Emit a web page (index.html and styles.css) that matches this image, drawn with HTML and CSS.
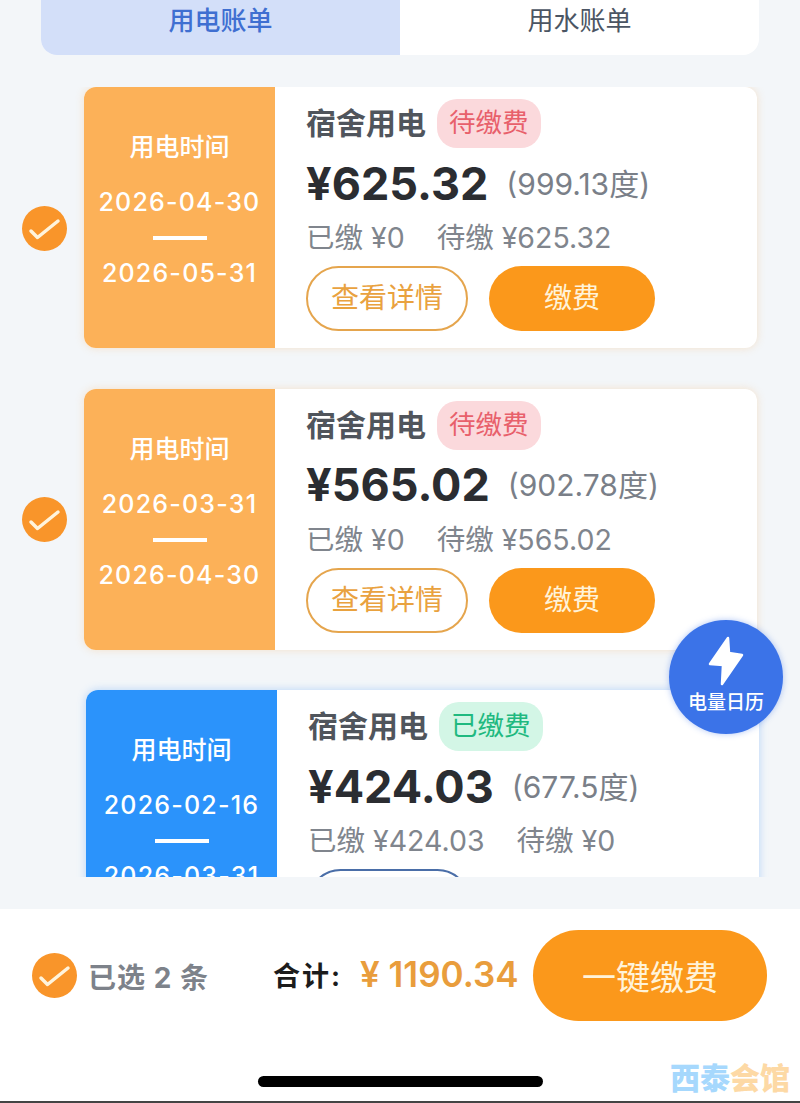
FILE: index.html
```html
<!DOCTYPE html>
<html lang="zh-CN">

<head>
  <meta charset="UTF-8">
  <meta name="viewport" content="width=device-width, initial-scale=1.0">
  <title>用电账单</title>
  <link rel="stylesheet" href="styles.css">
</head>

<body>
  <div class="page">
    <div class="tabs">
      <div class="tab tab-active">用电账单</div>
      <div class="tab">用水账单</div>
    </div>

    <div class="list">
      <div class="row">
        <svg class="check check-low" viewBox="0 0 45 45"><circle cx="22.5" cy="22.5" r="22.5" /><path d="M9 25l6.5 6.5L36 15" /></svg>
        <div class="card">
          <div class="period">
            <div class="period-title">用电时间</div>
            <div class="period-date">2026-04-30</div>
            <div class="period-bar"></div>
            <div class="period-date">2026-05-31</div>
          </div>
          <div class="info">
            <div class="info-title"><span class="info-name">宿舍用电</span> <span class="tag tag-unpaid">待缴费</span></div>
            <div class="info-amount"><b>¥625.32</b> <span class="usage">(999.13度)</span></div>
            <div class="info-paid"><span>已缴 ¥0</span><span>待缴 ¥625.32</span></div>
            <div class="actions">
              <button class="btn btn-detail">查看详情</button>
              <button class="btn btn-pay">缴费</button>
            </div>
          </div>
        </div>
      </div>

      <div class="row">
        <svg class="check" viewBox="0 0 45 45"><circle cx="22.5" cy="22.5" r="22.5" /><path d="M9 25l6.5 6.5L36 15" /></svg>
        <div class="card">
          <div class="period">
            <div class="period-title">用电时间</div>
            <div class="period-date">2026-03-31</div>
            <div class="period-bar"></div>
            <div class="period-date">2026-04-30</div>
          </div>
          <div class="info">
            <div class="info-title"><span class="info-name">宿舍用电</span> <span class="tag tag-unpaid">待缴费</span></div>
            <div class="info-amount"><b>¥565.02</b> <span class="usage">(902.78度)</span></div>
            <div class="info-paid"><span>已缴 ¥0</span><span>待缴 ¥565.02</span></div>
            <div class="actions">
              <button class="btn btn-detail">查看详情</button>
              <button class="btn btn-pay">缴费</button>
            </div>
          </div>
        </div>
      </div>

      <div class="row row-paid">
        <div class="check"></div>
        <div class="card">
          <div class="period">
            <div class="period-title">用电时间</div>
            <div class="period-date">2026-02-16</div>
            <div class="period-bar"></div>
            <div class="period-date">2026-03-31</div>
          </div>
          <div class="info">
            <div class="info-title"><span class="info-name">宿舍用电</span> <span class="tag tag-paid">已缴费</span></div>
            <div class="info-amount"><b>¥424.03</b> <span class="usage">(677.5度)</span></div>
            <div class="info-paid"><span>已缴 ¥424.03</span><span>待缴 ¥0</span></div>
            <div class="actions">
              <button class="btn btn-detail">查看详情</button>
            </div>
          </div>
        </div>
      </div>
    </div>

    <div class="fab">
      <svg class="fab-icon" viewBox="0 0 36 50"><path d="M20 2L2 28l13 1-1 19 20-29-13-2z" /></svg>
      <span>电量日历</span>
    </div>

    <div class="footer">
      <div class="summary">
        <svg class="check" viewBox="0 0 45 45"><circle cx="22.5" cy="22.5" r="22.5" /><path d="M9 25l6.5 6.5L36 15" /></svg>
        <span class="selected">已选 2 条</span>
        <span class="total-label">合计:</span>
        <span class="total">¥ 1190.34</span>
        <button class="btn-all">一键缴费</button>
      </div>
      <div class="home-bar"></div>
      <div class="watermark"><span class="wm-blue">西泰</span><span class="wm-orange">会馆</span></div>
    </div>
  </div>
</body>

</html>
```

FILE: styles.css
```css
* {
  box-sizing: border-box;
}

body {
  margin: 0;
  background-color: #f3f6f9;
  font-family: Inter, "Noto Sans CJK SC", sans-serif;
}

.page {
  position: relative;
  display: flex;
  flex-direction: column;
  width: 800px;
  height: 1103px;
  overflow: hidden;
}

.tabs {
  display: flex;
  flex-shrink: 0;
  height: 55px;
  margin: 0 41px;
  background-color: #fff;
  border-radius: 0 0 16px 16px;
  overflow: hidden;
}

.tab {
  flex: 1;
  padding-top: 1px;
  text-align: center;
  font-size: 26px;
  line-height: 40px;
  color: #4b5563;
}

.tab-active {
  background-color: #d3dff9;
  color: #3f6fd1;
  font-weight: 500;
}

.list {
  display: flex;
  flex-direction: column;
  flex-shrink: 0;
  gap: 40.5px;
  height: 790px;
  margin-top: 32px;
  padding-left: 22px;
  overflow: hidden;
}

.row {
  display: flex;
  flex-shrink: 0;
  align-items: center;
  gap: 17px;
}

.row-paid {
  margin-left: 2px;
}

.check {
  flex-shrink: 0;
  width: 45px;
  height: 45px;
}

.check circle {
  fill: #f9952a;
}

.check path {
  fill: none;
  stroke: #fff4dc;
  stroke-width: 3.5;
  stroke-linecap: round;
  stroke-linejoin: round;
}

.check-low {
  margin-top: 21px;
}

.card {
  display: flex;
  width: 673px;
  height: 261px;
  background-color: #fff;
  border-radius: 12px;
  box-shadow: 0 0 8px rgba(250, 180, 100, 0.3);
  overflow: hidden;
}

.row-paid .card {
  box-shadow: 0 0 8px rgba(70, 150, 250, 0.35);
}

.period {
  flex-shrink: 0;
  width: 191px;
  padding-top: 43px;
  background-color: #fcb158;
  color: #fff;
  text-align: center;
}

.row-paid .period {
  background-color: #2b93fb;
}

.period-title {
  font-size: 25px;
  line-height: 34px;
  font-weight: 500;
}

.period-date {
  font-size: 25px;
  line-height: 34px;
  font-weight: 500;
  letter-spacing: 1.2px;
}

.period-title + .period-date {
  margin-top: 21px;
}

.period-bar {
  width: 54px;
  height: 4px;
  margin: 17px auto 16px;
  background-color: #fff;
}

.info {
  flex: 1;
  padding: 12px 0 0 31px;
}

.info-title {
  display: flex;
  align-items: center;
  gap: 11px;
  font-size: 30px;
  font-weight: 700;
  color: #50555c;
}

.info-name {
  margin-bottom: 5px;
}

.tag {
  height: 49px;
  padding: 0 12px;
  border-radius: 20px;
  font-size: 26.5px;
  font-weight: 400;
  line-height: 46px;
}

.tag-unpaid {
  background-color: #fbd9dc;
  color: #e8606b;
}

.tag-paid {
  background-color: #d3f6e6;
  color: #1fb980;
}

.info-amount {
  display: flex;
  align-items: center;
  gap: 18px;
  height: 60px;
  margin-top: 5px;
  color: #2b2d31;
}

.info-amount b {
  font-size: 45px;
  font-weight: 700;
}

.usage {
  margin-bottom: 3px;
  font-size: 30px;
  color: #7a7f88;
}

.info-paid {
  display: flex;
  gap: 32px;
  height: 36px;
  margin-top: 7px;
  font-size: 28.5px;
  line-height: 36px;
  color: #80858d;
}

.actions {
  display: flex;
  gap: 21px;
  margin-top: 10px;
}

.btn {
  height: 65px;
  padding: 0 0 5px;
  border-radius: 33px;
  font-family: inherit;
  font-size: 28px;
}

.btn-detail {
  width: 162px;
  background-color: #fff;
  border: 2px solid #e5a54d;
  color: #e9a23f;
}

.row-paid .btn-detail {
  border-color: #4a6ea8;
  color: #4a6ea8;
}

.btn-pay {
  width: 166px;
  background-color: #fb981b;
  border: none;
  color: #fff3d9;
}

.fab {
  position: absolute;
  top: 620px;
  left: 669px;
  display: flex;
  flex-direction: column;
  align-items: center;
  width: 114px;
  height: 114px;
  padding-top: 16px;
  background-color: #3b73e8;
  border-radius: 50%;
  box-shadow: 0 0 6px rgba(59, 115, 232, 0.4);
  color: #fff;
  font-size: 19px;
  line-height: 26px;
  font-weight: 500;
}

.fab-icon {
  width: 36px;
  height: 50px;
  margin-bottom: 4px;
}

.fab-icon path {
  fill: #fff;
  stroke: #fff;
  stroke-width: 2.5;
  stroke-linejoin: round;
}

.footer {
  position: relative;
  flex: 1;
  margin-top: 32px;
  padding-top: 21px;
  background-color: #fff;
  border-bottom: 2px solid #444;
}

.summary {
  display: flex;
  align-items: center;
  height: 91px;
  padding: 0 33px 0 32px;
}

.selected {
  width: 185px;
  margin-left: 11px;
  font-size: 28px;
  font-weight: 700;
  letter-spacing: 1px;
  color: #7d828a;
}

.total-label {
  width: 87px;
  margin-bottom: 3px;
  font-size: 27px;
  font-weight: 700;
  letter-spacing: 2px;
  color: #1c1c1c;
}

.total {
  margin-bottom: 3px;
  font-size: 35px;
  font-weight: 600;
  white-space: nowrap;
  color: #e99d3c;
}

.btn-all {
  width: 234px;
  height: 91px;
  margin-left: auto;
  padding: 0;
  background-color: #fb981b;
  border: none;
  border-radius: 46px;
  font-family: inherit;
  font-size: 34px;
  color: #fff3d9;
}

.home-bar {
  width: 285px;
  height: 11px;
  margin: 55px 0 0 258px;
  background-color: #000;
  border-radius: 6px;
}

.watermark {
  position: absolute;
  right: 10px;
  bottom: 5px;
  font-size: 30px;
  line-height: 36px;
  font-weight: 900;
  white-space: nowrap;
}

.wm-blue {
  color: #a6d8fd;
}

.wm-orange {
  color: #fdd9a5;
}
```
